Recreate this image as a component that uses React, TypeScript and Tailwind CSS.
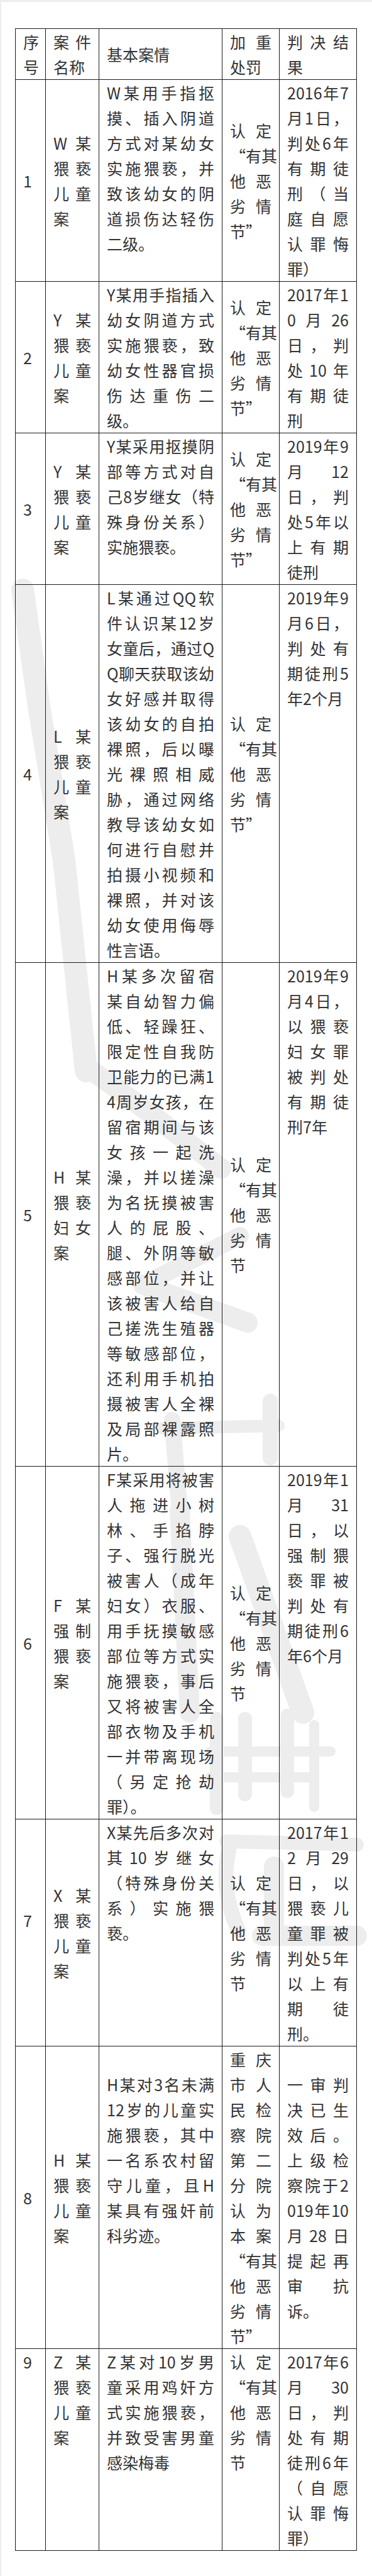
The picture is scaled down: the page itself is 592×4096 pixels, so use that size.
import React from "react";

type Cell = { lines: string[]; top?: boolean };

const quoted = ["认定", "“有其", "他恶", "劣情", "节”"];
const plain = ["认定", "“有其", "他恶", "劣情", "节"];

const header: Cell[] = [
  { lines: ["序", "号"] },
  { lines: ["案件", "名称"] },
  { lines: ["基本案情"] },
  { lines: ["加重", "处罚"] },
  { lines: ["判决结", "果"] },
];

const rows: Cell[][] = [
  [
    { lines: ["1"] },
    { lines: ["W某", "猥亵", "儿童", "案"] },
    {
      lines: ["W某用手指抠", "摸、插入阴道", "方式对某幼女", "实施猥亵，并", "致该幼女的阴", "道损伤达轻伤", "二级。"],
      top: true,
    },
    { lines: quoted },
    { lines: ["2016年7", "月1日，", "判处6年", "有期徒", "刑（当", "庭自愿", "认罪悔", "罪）"] },
  ],
  [
    { lines: ["2"] },
    { lines: ["Y某", "猥亵", "儿童", "案"] },
    { lines: ["Y某用手指插入", "幼女阴道方式", "实施猥亵，致", "幼女性器官损", "伤达重伤二", "级。"] },
    { lines: quoted },
    { lines: ["2017年1", "0月26", "日，判", "处10年", "有期徒", "刑"] },
  ],
  [
    { lines: ["3"] },
    { lines: ["Y某", "猥亵", "儿童", "案"] },
    { lines: ["Y某采用抠摸阴", "部等方式对自", "己8岁继女（特", "殊身份关系）", "实施猥亵。"], top: true },
    { lines: quoted },
    { lines: ["2019年9", "月12", "日，判", "处5年以", "上有期", "徒刑"] },
  ],
  [
    { lines: ["4"] },
    { lines: ["L某", "猥亵", "儿童", "案"] },
    {
      lines: [
        "L某通过QQ软",
        "件认识某12岁",
        "女童后，通过Q",
        "Q聊天获取该幼",
        "女好感并取得",
        "该幼女的自拍",
        "裸照，后以曝",
        "光裸照相威",
        "胁，通过网络",
        "教导该幼女如",
        "何进行自慰并",
        "拍摄小视频和",
        "裸照，并对该",
        "幼女使用侮辱",
        "性言语。",
      ],
    },
    { lines: quoted },
    { lines: ["2019年9", "月6日，", "判处有", "期徒刑5", "年2个月"], top: true },
  ],
  [
    { lines: ["5"] },
    { lines: ["H某", "猥亵", "妇女", "案"] },
    {
      lines: [
        "H某多次留宿",
        "某自幼智力偏",
        "低、轻躁狂、",
        "限定性自我防",
        "卫能力的已满1",
        "4周岁女孩，在",
        "留宿期间与该",
        "女孩一起洗",
        "澡，并以搓澡",
        "为名抚摸被害",
        "人的屁股、",
        "腿、外阴等敏",
        "感部位，并让",
        "该被害人给自",
        "己搓洗生殖器",
        "等敏感部位，",
        "还利用手机拍",
        "摄被害人全裸",
        "及局部裸露照",
        "片。",
      ],
    },
    { lines: plain },
    { lines: ["2019年9", "月4日，", "以猥亵", "妇女罪", "被判处", "有期徒", "刑7年"], top: true },
  ],
  [
    { lines: ["6"] },
    { lines: ["F某", "强制", "猥亵", "案"] },
    {
      lines: [
        "F某采用将被害",
        "人拖进小树",
        "林、手掐脖",
        "子、强行脱光",
        "被害人（成年",
        "妇女）衣服、",
        "用手抚摸敏感",
        "部位等方式实",
        "施猥亵，事后",
        "又将被害人全",
        "部衣物及手机",
        "一并带离现场",
        "（另定抢劫",
        "罪）。",
      ],
    },
    { lines: plain },
    { lines: ["2019年1", "月31", "日，以", "强制猥", "亵罪被", "判处有", "期徒刑6", "年6个月"], top: true },
  ],
  [
    { lines: ["7", ""] },
    { lines: ["X某", "猥亵", "儿童", "案"] },
    { lines: ["X某先后多次对", "其10岁继女", "（特殊身份关", "系）实施猥", "亵。"], top: true },
    { lines: plain },
    { lines: ["2017年1", "2月29", "日，以", "猥亵儿", "童罪被", "判处5年", "以上有", "期徒", "刑。"] },
  ],
  [
    { lines: ["8"] },
    { lines: ["H某", "猥亵", "儿童", "案"] },
    {
      lines: ["", "H某对3名未满", "12岁的儿童实", "施猥亵，其中", "一名系农村留", "守儿童，且H", "某具有强奸前", "科劣迹。"],
      top: true,
    },
    { lines: ["重庆", "市人", "民检", "察院", "第二", "分院", "认为", "本案", "“有其", "他恶", "劣情", "节”"] },
    { lines: ["一审判", "决已生", "效后。", "上级检", "察院于2", "019年10", "月28日", "提起再", "审抗", "诉。"] },
  ],
  [
    { lines: ["9"], top: true },
    { lines: ["Z某", "猥亵", "儿童", "案"], top: true },
    { lines: ["Z某对10岁男", "童采用鸡奸方", "式实施猥亵，", "并致受害男童", "感染梅毒"], top: true },
    { lines: plain, top: true },
    { lines: ["2017年6", "月30", "日，判", "处有期", "徒刑6年", "（自愿", "认罪悔", "罪）"] },
  ],
];

// faint calligraphy watermark behind the table
function Watermark() {
  return (
    <svg
      className="absolute left-0 top-0 -z-10"
      width="592"
      height="4096"
      viewBox="0 0 592 4096"
      fill="none"
      stroke="#ededed"
      strokeLinecap="round"
    >
      <path d="M34 935 L60 1120 L100 1365 L135 1700" strokeWidth="36" />
      <path d="M145 1700 Q230 1760 350 1855" strokeWidth="32" />
      <path d="M245 2030 L380 1962" strokeWidth="28" />
      <path d="M226 2040 L392 2100" strokeWidth="32" />
      <path d="M272 2255 L284 2400" strokeWidth="26" />
      <path d="M257 2268 L441 2264" strokeWidth="20" />
      <path d="M428 2225 L428 2315" strokeWidth="24" />
      <path d="M284 2400 L300 2720" strokeWidth="32" />
      <path d="M380 2440 L480 2720" strokeWidth="36" />
      <path d="M343 2730 V2872 M388 2730 V2850 M455 2725 V2845" strokeWidth="22" />
      <path d="M498 2740 V2870" strokeWidth="16" />
      <path d="M332 2782 H524 M332 2823 H490" strokeWidth="16" />
      <path d="M358 2925 L566 2930" strokeWidth="22" />
      <path d="M362 2940 Q348 3000 377 3066" strokeWidth="24" />
      <path d="M434 2965 V3066" strokeWidth="32" />
      <path d="M415 3075 H566" strokeWidth="32" />
    </svg>
  );
}

function Lines({ lines }: { lines: string[] }) {
  return (
    <>
      {lines.map((t, i) => (
        <div
          key={i}
          className={
            i < lines.length - 1
              ? "h-[40px] w-max min-w-full text-justify [text-align-last:justify]"
              : "h-[40px] w-max min-w-full text-left"
          }
        >
          {t || "\u00a0"}
        </div>
      ))}
    </>
  );
}

function Td({ cell }: { cell: Cell }) {
  return (
    <td
      className={`border border-[#1c1c1c] px-3 py-0 font-['Noto_Sans_CJK_SC','Noto_Sans',sans-serif] text-[25px] leading-[40px] text-[#333333] ${
        cell.top ? "align-top" : "align-middle"
      }`}
    >
      <Lines lines={cell.lines} />
    </td>
  );
}

export default function App() {
  return (
    <div className="relative isolate min-h-screen bg-white border-t-[3px] border-l-2 border-[#eeeeee]">
      <Watermark />
      <table className="ml-[22px] mt-[42px] w-[543px] table-fixed border-collapse">
        <colgroup>
          <col className="w-[48px]" />
          <col className="w-[85px]" />
          <col className="w-[196px]" />
          <col className="w-[91px]" />
          <col className="w-[123px]" />
        </colgroup>
        <thead>
          <tr>
            {header.map((c, i) => (
              <Td key={i} cell={c} />
            ))}
          </tr>
        </thead>
        <tbody>
          {rows.map((r, i) => (
            <tr key={i}>
              {r.map((c, j) => (
                <Td key={j} cell={c} />
              ))}
            </tr>
          ))}
        </tbody>
      </table>
    </div>
  );
}
